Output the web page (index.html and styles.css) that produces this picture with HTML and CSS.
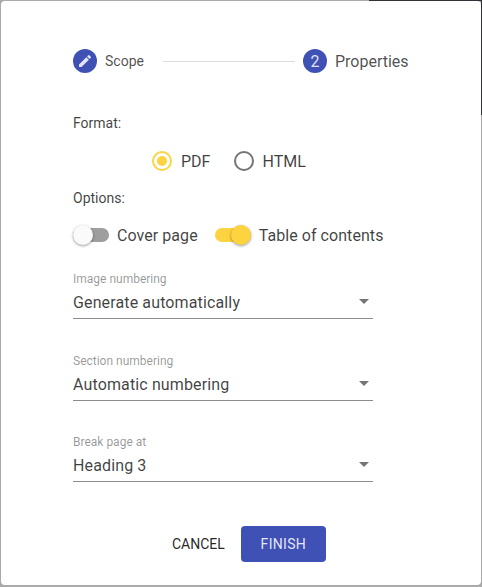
FILE: index.html
```html
<!DOCTYPE html>
<html>
<head>
<title>Export</title>
<link rel="stylesheet" href="styles.css">
</head>
<body>
<div class="dialog">
  <div class="stepper">
    <div class="step-circle">
      <svg class="edit-icon" viewBox="0 0 24 24"><path d="M3 17.25V21h3.75L17.81 9.94l-3.75-3.75L3 17.25zM20.71 7.04a1 1 0 0 0 0-1.41l-2.34-2.34a1 1 0 0 0-1.41 0l-1.83 1.83 3.75 3.75 1.83-1.83z"/></svg>
    </div>
    <span class="step-label">Scope</span>
    <div class="step-line"></div>
    <div class="step-circle">2</div>
    <span class="step-label step-active">Properties</span>
  </div>

  <div class="section-label format-label">Format:</div>
  <div class="radio-row">
    <div class="radio radio-on"><div class="radio-dot"></div></div>
    <span class="radio-text pdf-text">PDF</span>
    <div class="radio"></div>
    <span class="radio-text">HTML</span>
  </div>

  <div class="section-label options-label">Options:</div>
  <div class="toggle-row">
    <div class="toggle">
      <div class="toggle-thumb"></div>
    </div>
    <span class="toggle-text cover-text">Cover page</span>
    <div class="toggle toggle-on">
      <div class="toggle-thumb"></div>
    </div>
    <span class="toggle-text">Table of contents</span>
  </div>

  <div class="field first-field">
    <div class="field-label">Image numbering</div>
    <div class="field-value">Generate automatically<span class="arrow"></span></div>
  </div>
  <div class="field">
    <div class="field-label">Section numbering</div>
    <div class="field-value">Automatic numbering<span class="arrow"></span></div>
  </div>
  <div class="field">
    <div class="field-label">Break page at</div>
    <div class="field-value">Heading 3<span class="arrow"></span></div>
  </div>

  <div class="actions">
    <button class="btn-cancel">CANCEL</button>
    <button class="btn-finish">FINISH</button>
  </div>
</div>
</body>
</html>
```

FILE: styles.css
```css
/* Backdrop behind the dialog */
html, body {
  height: 100%;
}

body {
  margin: 0;
  padding: 1px 1px 2px 1px;
  box-sizing: border-box;
  background: linear-gradient(#2f3338, #2f3338) right top / 113px 1px no-repeat,
    linear-gradient(#2f3338, #2f3338) right top / 1px 115px no-repeat,
    #aaa;
  font-family: Roboto, sans-serif;
  color: rgba(0, 0, 0, 0.75);
  overflow: hidden;
}

.dialog {
  height: 584px;
  background-color: white;
  border-radius: 4px;
  padding: 0 72px;
  box-sizing: border-box;
}

/* Stepper */
.stepper {
  display: flex;
  align-items: center;
  padding-top: 48px;
  height: 24px;
  box-sizing: content-box;
}

.step-circle {
  width: 24px;
  height: 24px;
  border-radius: 50%;
  background-color: #3f51b5;
  color: rgba(255, 255, 255, 0.85);
  font-size: 16px;
  display: flex;
  align-items: center;
  justify-content: center;
  flex-shrink: 0;
}

.edit-icon {
  width: 16px;
  height: 16px;
  fill: rgba(255, 255, 255, 0.85);
}

.step-label {
  margin-left: 8px;
  font-size: 14px;
  color: rgba(0, 0, 0, 0.7);
}

.step-active {
  font-size: 16px;
}

.step-line {
  width: 132px;
  height: 1px;
  background-color: #ddd;
  margin: 0 8px 0 19px;
}

/* Format and options */
.section-label {
  font-size: 14px;
  line-height: 16px;
}

.format-label {
  margin-top: 42px;
}

.options-label {
  margin-top: 19px;
}

.radio-row {
  display: flex;
  align-items: center;
  margin-top: 20px;
  padding-left: 79px;
  height: 20px;
}

.radio {
  width: 20px;
  height: 20px;
  border: 2px solid #757575;
  border-radius: 50%;
  box-sizing: border-box;
  display: flex;
  align-items: center;
  justify-content: center;
  flex-shrink: 0;
}

.radio-on {
  border-color: #fdd43f;
}

.radio-dot {
  width: 10px;
  height: 10px;
  border-radius: 50%;
  background-color: #fdd43f;
}

.radio-text {
  margin-left: 8px;
  font-size: 16px;
}

.pdf-text {
  margin-left: 9px;
  margin-right: 24px;
}

.toggle-row {
  display: flex;
  align-items: center;
  margin-top: 19px;
  height: 20px;
}

.toggle {
  position: relative;
  width: 36px;
  height: 14px;
  border-radius: 7px;
  background-color: #9e9e9e;
  flex-shrink: 0;
}

.toggle-on {
  background-color: #fdd43f;
}

.toggle-thumb {
  position: absolute;
  top: -3px;
  left: 0;
  width: 20px;
  height: 20px;
  border-radius: 50%;
  background-color: #fafafa;
  box-shadow: 0 1px 3px rgba(0, 0, 0, 0.4);
}

.toggle-on .toggle-thumb {
  left: 16px;
  background-color: #fdd43f;
}

.toggle-text {
  margin-left: 8px;
  font-size: 16px;
  letter-spacing: 0.06px;
}

.cover-text {
  margin-right: 17px;
}

/* Select fields */
.field {
  width: 300px;
  height: 46px;
  margin-top: 34.5px;
  border-bottom: 1px solid #8c8c8c;
}

.first-field {
  margin-top: 27px;
}

.field-label {
  font-size: 12px;
  line-height: 14px;
  color: rgba(0, 0, 0, 0.42);
}

.field-value {
  position: relative;
  margin-top: 7px;
  font-size: 16px;
  line-height: 19px;
  letter-spacing: 0.13px;
}

.arrow {
  position: absolute;
  right: 4px;
  top: 6px;
  border-left: 5px solid transparent;
  border-right: 5px solid transparent;
  border-top: 5px solid #757575;
}

/* Buttons */
.actions {
  display: flex;
  align-items: center;
  margin-top: 44px;
  padding-left: 99px;
}

.btn-cancel, .btn-finish {
  font-family: Roboto, sans-serif;
  font-size: 14px;
  border: none;
  height: 36px;
  cursor: pointer;
}

.btn-cancel {
  background-color: transparent;
  color: rgba(0, 0, 0, 0.87);
  padding: 0;
  margin-right: 16px;
}

.btn-finish {
  width: 85px;
  background-color: #3f51b5;
  color: rgba(255, 255, 255, 0.87);
  border-radius: 4px;
  letter-spacing: 0.3px;
}
```
